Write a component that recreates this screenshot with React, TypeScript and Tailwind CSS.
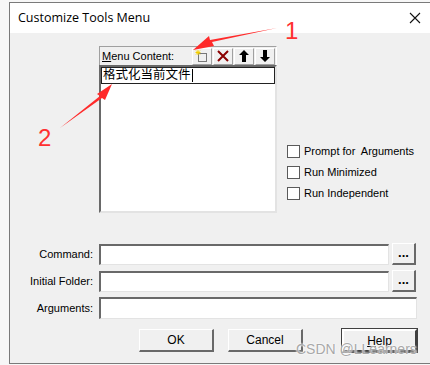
import React from 'react';

const ui = { fontFamily: '"Liberation Sans", Arial, sans-serif' };
const cjk = { fontFamily: '"Liberation Sans", "Noto Sans CJK SC", sans-serif' };

function ToolButton({ children }: { children: React.ReactNode }) {
  return (
    <div className="w-[20px] h-[17px] flex items-center justify-center bg-[#f0f0f0] border-t border-l border-white border-r border-b border-r-[#a0a0a0] border-b-[#a0a0a0]">
      {children}
    </div>
  );
}

function Sunken({ className }: { className: string }) {
  return (
    <div className={`bg-white border-t-2 border-l-2 border-t-[#696969] border-l-[#696969] border-r border-b border-r-[#e3e3e3] border-b-[#e3e3e3] ${className}`} />
  );
}

function Browse() {
  return (
    <div className="w-[24px] h-[22px] flex items-end justify-center pb-[4px] bg-[#f0f0f0] border-t border-l border-white border-r-2 border-b-2 border-r-[#696969] border-b-[#696969] text-[13px] font-bold leading-none">
      ...
    </div>
  );
}

function Check({ label }: { label: string }) {
  return (
    <div className="flex items-center gap-[4px] h-[13px]">
      <div className="w-[13px] h-[13px] bg-white border border-[#5a5a5a]" />
      <span className="text-[11px] text-black whitespace-pre">{label}</span>
    </div>
  );
}

function DlgButton({ label, def }: { label: React.ReactNode; def?: boolean }) {
  return (
    <div
      className={`w-[75px] h-[23px] flex items-center justify-center text-[12px] bg-[#f0f0f0] ${
        def
          ? 'border-2 border-t-[#ffffff] border-l-[#ffffff] border-r-[#404040] border-b-[#404040] outline outline-1 outline-[#404040]'
          : 'border-t border-l border-white border-r-2 border-b-2 border-r-[#696969] border-b-[#696969]'
      }`}
    >
      {label}
    </div>
  );
}

export default function App() {
  return (
    <div className="relative w-[430px] h-[365px] bg-[#f7f7f7] overflow-hidden" style={ui}>
      <div className="absolute left-[9px] top-[2px] w-[440px] h-[362px] border border-[#7a7a7a] flex flex-col">
        {/* title bar */}
        <div className="h-[30px] bg-white flex items-center justify-between pl-[8px] pr-[27px]">
          <span className="text-[12.5px] text-black" style={{ fontFamily: '"Open Sans", "Noto Sans", sans-serif' }}>
            Customize Tools Menu
          </span>
          <svg width="12" height="12" viewBox="0 0 12 12">
            <path d="M1 1 L11 11 M11 1 L1 11" stroke="#111" strokeWidth="1.1" />
          </svg>
        </div>

        {/* body */}
        <div className="flex-1 bg-[#f0f0f0] flex flex-col">
          <div className="flex mt-[13px]">
            <div className="ml-[89px] w-[178px] flex flex-col">
              <div className="h-[19px] flex items-center border-t border-l border-[#a0a0a0] border-r border-r-white">
                <span className="text-[11px] ml-[2px] flex-1">
                  <span className="underline">M</span>enu Content:
                </span>
                <div className="flex gap-[1px] mr-[1px]">
                  <ToolButton>
                    <svg width="14" height="13" viewBox="0 0 14 13">
                      <rect x="3.5" y="3.5" width="8" height="8" fill="none" stroke="#000" strokeDasharray="1 1" />
                      <path d="M3 0 V5 M0.5 2.5 H5.5 M1 0.5 L5 4.5 M5 0.5 L1 4.5" stroke="#f5d000" strokeWidth="1" />
                    </svg>
                  </ToolButton>
                  <ToolButton>
                    <svg width="12" height="12" viewBox="0 0 12 12">
                      <path d="M1 1 L11 11 M11 1 L1 11" stroke="#8b0000" strokeWidth="2" />
                    </svg>
                  </ToolButton>
                  <ToolButton>
                    <svg width="10" height="12" viewBox="0 0 10 12">
                      <path d="M5 0 L10 5 L7 5 L7 12 L3 12 L3 5 L0 5 Z" fill="#000" />
                    </svg>
                  </ToolButton>
                  <ToolButton>
                    <svg width="10" height="12" viewBox="0 0 10 12">
                      <path d="M5 12 L10 7 L7 7 L7 0 L3 0 L3 7 L0 7 Z" fill="#000" />
                    </svg>
                  </ToolButton>
                </div>
              </div>
              <div className="h-[148px] bg-white border-t-2 border-l-2 border-t-[#696969] border-l-[#696969] border-r-2 border-b-2 border-r-[#e3e3e3] border-b-[#e3e3e3]">
                <div className="h-[17px] border border-[#222] flex items-center pl-[1px]">
                  <span className="text-[12.5px] leading-none text-black" style={cjk}>格式化当前文件</span>
                  <span className="w-[1px] h-[13px] bg-black ml-[1px]" />
                </div>
              </div>
            </div>
            <div className="ml-[10px] mt-[99px] flex flex-col gap-[8px]">
              <Check label="Prompt for  Arguments" />
              <Check label="Run Minimized" />
              <Check label="Run Independent" />
            </div>
          </div>

          <div className="flex flex-col gap-[5px] mt-[30px]">
            <div className="flex items-center">
              <span className="w-[83px] text-right text-[11px]">Command:</span>
              <Sunken className="ml-[6px] w-[290px] h-[21px]" />
              <div className="ml-[3px]"><Browse /></div>
            </div>
            <div className="flex items-center">
              <span className="w-[83px] text-right text-[11px]">Initial Folder:</span>
              <Sunken className="ml-[6px] w-[290px] h-[21px]" />
              <div className="ml-[3px]"><Browse /></div>
            </div>
            <div className="flex items-center">
              <span className="w-[83px] text-right text-[11px]">Arguments:</span>
              <Sunken className="ml-[6px] w-[318px] h-[22px]" />
            </div>
          </div>

          <div className="flex mt-[10px] ml-[129px] gap-[14px]">
            <DlgButton label="OK" />
            <DlgButton label="Cancel" />
            <div className="ml-[25px]">
              <DlgButton def label={<><span className="underline">H</span>elp</>} />
            </div>
          </div>
        </div>
      </div>

      {/* watermark */}
      <span
        className="absolute left-[296px] top-[342px] text-[14px] text-[#a8a8a8] leading-none"
        style={{ textShadow: '0 0 2px #fff, 0 0 2px #fff' }}
      >
        CSDN @LLearners
      </span>

      {/* annotations */}
      <svg className="absolute left-0 top-0 pointer-events-none" width="430" height="365" viewBox="0 0 430 365">
        <path d="M277 28 L212 42 L214 46 L193 50 L209 36 L210 40 Z" fill="#ff2a2a" />
        <path d="M60 128 L100 96 L97 94 L112 84 L105 100 L102 98 Z" fill="#ff2a2a" />
        <text x="285" y="39" fontSize="24" fill="#ff3030" fontFamily="Liberation Sans, Arial, sans-serif">1</text>
        <text x="38" y="146" fontSize="24" fill="#ff3030" fontFamily="Liberation Sans, Arial, sans-serif">2</text>
      </svg>
    </div>
  );
}
